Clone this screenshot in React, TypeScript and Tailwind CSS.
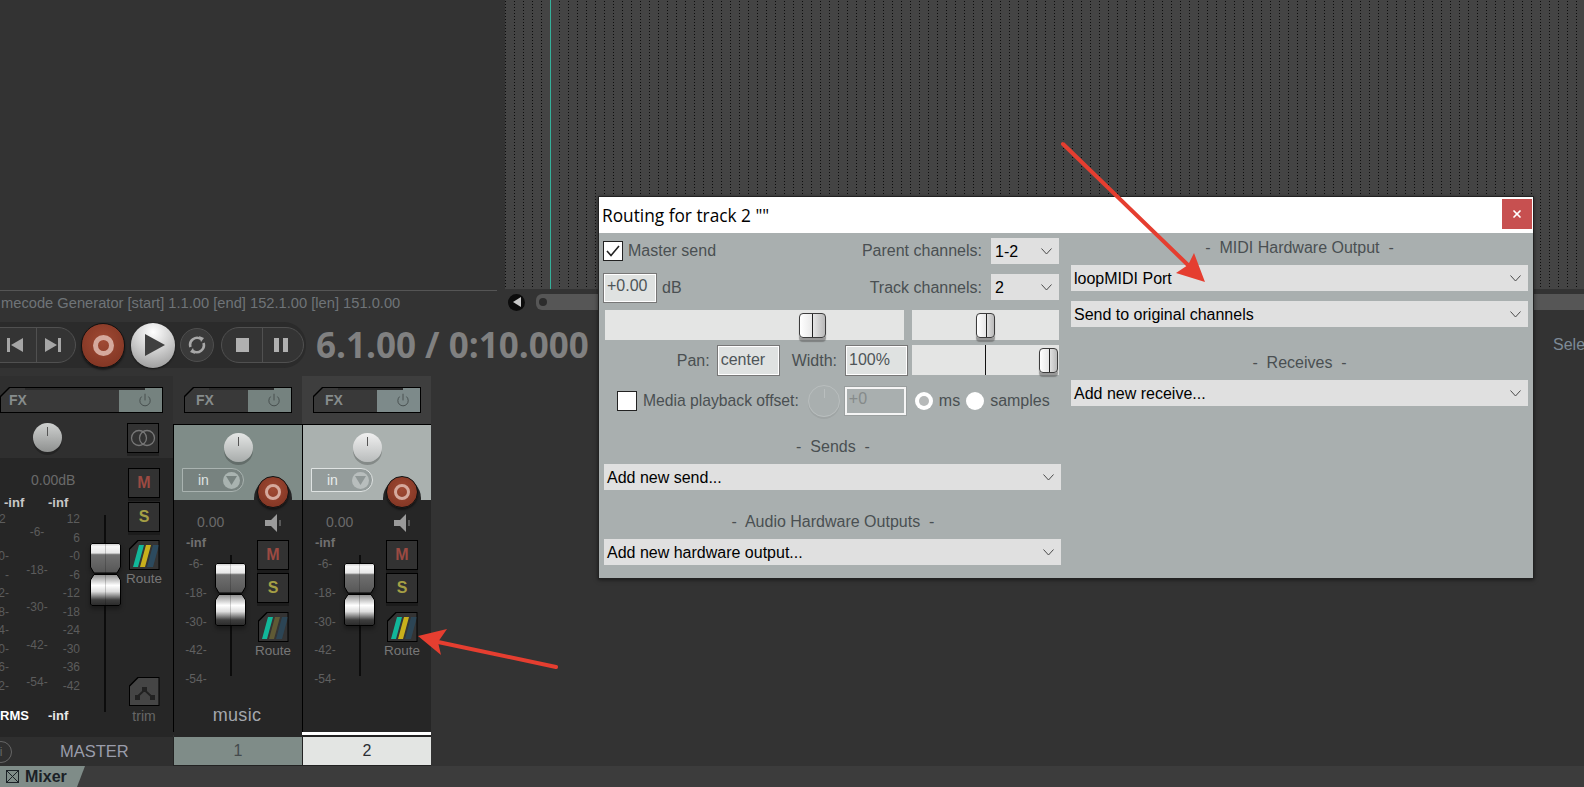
import { Power, X } from "lucide-react";

const chamfer = "[clip-path:polygon(9px_0,100%_0,100%_100%,0_100%,0_9px)]";

function Knob({ face, tick }: { face: string; tick: string }) {
  return (
    <div className={`relative h-[29px] w-[29px] shrink-0 rounded-full shadow-[0_3px_0_rgba(0,0,0,0.22)] ${face}`}>
      <div className={`absolute left-[14px] top-[4px] h-[9px] w-px ${tick}`} />
    </div>
  );
}

function FxButton({ wide, powerBg }: { wide?: boolean; powerBg: string }) {
  return (
    <div className={`relative h-[26px] shrink-0 bg-black p-px shadow-[0_3px_0_rgba(0,0,0,0.2)] ${chamfer} ${wide ? "w-[163px]" : "w-[108px]"}`}>
      <div className={`flex h-full ${chamfer}`}>
        <div className={`flex flex-1 items-center bg-[#393939] text-[14px] font-bold text-[#868c8c] ${wide ? "pl-[8px]" : "pl-[11px]"}`}>FX</div>
        <div className={`flex w-[43px] items-center justify-end pr-[10px] ${powerBg}`}>
          <Power size={14} strokeWidth={1.3} className="text-[#3a4141]" />
        </div>
      </div>
      <div className="absolute left-[25px] right-[18px] top-px h-[2px] bg-[#2a2a2a]" />
    </div>
  );
}

function SquareButton({ label, color }: { label: string; color: string }) {
  return (
    <div className={`flex h-[30px] w-[32px] items-center justify-center border border-black bg-[#323232] text-[16px] font-bold shadow-[0_3px_0_rgba(0,0,0,0.25)] ${color}`}>
      {label}
    </div>
  );
}

function RouteButton({ yellow, blue }: { yellow: string; blue: string }) {
  return (
    <div className={`h-[30px] w-[31px] bg-black p-px ${chamfer}`}>
      <svg viewBox="0 0 29 28" className={`h-full w-full bg-[#343434] ${chamfer}`}>
        <polygon points="3,26 8,26 14,4 9,4" fill="#12b79a" />
        <polygon points="10,26 15,26 21,4 16,4" fill={yellow} />
        <polygon points="17,26 23,26 29,4 23,4" fill={blue} />
      </svg>
    </div>
  );
}

function Fader() {
  return (
    <svg width="31" height="63" viewBox="0 0 31 63" className="block shrink-0 drop-shadow-[0_3px_2px_rgba(0,0,0,0.35)]">
      <defs>
        <linearGradient id="faderTop" x1="0" y1="0" x2="0" y2="1">
          <stop offset="0" stopColor="#c9c9c9" />
          <stop offset="0.1" stopColor="#f6f6f6" />
          <stop offset="0.32" stopColor="#e8e8e8" />
          <stop offset="0.38" stopColor="#707070" />
          <stop offset="1" stopColor="#565656" />
        </linearGradient>
        <linearGradient id="faderBottom" x1="0" y1="0" x2="0" y2="1">
          <stop offset="0" stopColor="#8c8c8c" />
          <stop offset="0.35" stopColor="#ffffff" />
          <stop offset="0.55" stopColor="#dddddd" />
          <stop offset="0.82" stopColor="#3f3f3f" />
          <stop offset="1" stopColor="#2a2a2a" />
        </linearGradient>
      </defs>
      <path d="M2 .5H29L30.5 2V24L27 30H4L.5 24V2Z" fill="url(#faderTop)" stroke="#000" />
      <path d="M4 31.5H27L30.5 37V61L29 62.5H2L.5 61V37Z" fill="url(#faderBottom)" stroke="#000" />
      <line x1="15.5" y1="1" x2="15.5" y2="62" stroke="#000" strokeOpacity="0.18" />
    </svg>
  );
}

function RecordButton({ big }: { big?: boolean }) {
  return (
    <div className={`flex items-center justify-center rounded-full border border-[#111] bg-[radial-gradient(circle_at_50%_40%,#a04a34,#7b3120)] shadow-[0_2px_2px_rgba(0,0,0,0.5)] ${big ? "h-[45px] w-[44px]" : "h-[32px] w-[32px]"}`}>
      <div className={`rounded-full border-[#d5a99d] ${big ? "h-[21px] w-[21px] border-[5px]" : "h-[16px] w-[16px] border-[3.5px]"}`} />
    </div>
  );
}

function Strip({ num, name, active }: { num: string; name: string; active?: boolean }) {
  return (
    <div className={`flex w-[129px] shrink-0 flex-col ${active ? "bg-[#3e3e3e]" : ""}`}>
      <div className="flex h-[48px] shrink-0 pl-[11px] pt-[11px]">
        <FxButton powerBg={active ? "bg-[#7d8a8a]" : "bg-[#75827f]"} />
      </div>
      <div className="flex w-full flex-1 flex-col border-l border-l-black">
        <div className={`relative h-[76px] shrink-0 overflow-hidden border-t border-t-black pt-[8px] ${active ? "bg-[#aab1af]" : "bg-[#7f8c88]"}`}>
          <div className="ml-[50px]">
            <Knob face={active ? "bg-[linear-gradient(#f0f0f0,#b9bcbc)]" : "bg-[linear-gradient(#e4e6e5,#a8acab)]"} tick="bg-[#555]" />
          </div>
          <div className={`ml-[8px] mt-[6px] flex h-[24px] w-[62px] items-center rounded-l-[2px] rounded-r-full border-[1.5px] pl-[15px] pr-[3px] text-[14px] ${active ? "border-[#dfe3e2] bg-[#949c9b] text-[#e9ecec]" : "border-[#a9b3b0] bg-[#77827f] text-[#dfe3e2]"}`}>
            <span className="flex-1">in</span>
            <span className={`flex h-[17px] w-[17px] items-center justify-center rounded-full ${active ? "bg-[#b8bebd]" : "bg-[#a9b3b0]"}`}>
              <svg width="11" height="9" viewBox="0 0 11 9">
                <polygon points="0,0 11,0 5.5,9" fill={active ? "#8f9796" : "#77827f"} />
              </svg>
            </span>
          </div>
          <div className="absolute left-[80px] top-[54px] h-[38px] w-[38px] rounded-full bg-[#262626]" />
        </div>
        <div className="relative flex flex-1 flex-col bg-[#262626]">
          <div className="absolute left-[83px] top-[-24px]">
            <RecordButton />
          </div>
          <div className="flex">
            <div className="w-[72px]">
              <div className="ml-[23px] mt-[14px] h-[16px] text-[14px] leading-[16px] text-[#6a6a6a]">0.00</div>
              <div className="flex">
                <div className="ml-[3px] flex w-[38px] flex-col items-center text-[12px] leading-[14px] text-[#606060]">
                  <span className="mb-[7px] mt-[6px] text-[13px] font-bold text-[#707070]">-inf</span>
                  <div className="flex flex-col items-center gap-[14.75px]">
                    {["-6-", "-18-", "-30-", "-42-", "-54-"].map((label) => (
                      <span key={label}>{label}</span>
                    ))}
                  </div>
                </div>
                <div className="flex w-[31px] flex-col items-center pt-[25px]">
                  <div className="h-[8px] w-[2px] bg-[#0c0c0c]" />
                  <Fader />
                  <div className="h-[50px] w-[2px] bg-[#0c0c0c]" />
                </div>
              </div>
            </div>
            <div className="ml-[11px] flex w-[32px] flex-col items-center pt-[14px]">
              <svg width="16" height="18" viewBox="0 0 16 18" className="mb-[8px]">
                <polygon points="0,6 6,6 12,0 12,18 6,12 0,12" fill="#9a9a9a" />
                <line x1="15" y1="6" x2="15" y2="12" stroke="#8a8a8a" />
              </svg>
              <SquareButton label="M" color="text-[#9b4a42]" />
              <div className="h-[3px]" />
              <SquareButton label="S" color="text-[#a59f45]" />
              <div className="h-[9px]" />
              <RouteButton yellow={active ? "#c9b01c" : "#5f5a35"} blue="#2c4555" />
              <div className="mt-px whitespace-nowrap text-[13.5px] leading-[16px] text-[#777]">Route</div>
            </div>
          </div>
          <div className="mt-[17px] h-[24px] w-[126px] text-center text-[18px] leading-[24px] tracking-[0.3px] text-[#a3a7ad]">{name}</div>
        </div>
      </div>
      {active ? <div className="h-[3px] shrink-0 bg-white" /> : <div className="h-[3px] shrink-0 bg-[#262626]" />}
      <div className={`h-[2px] shrink-0 ${active ? "bg-[#222]" : "border-l border-l-[#2f2f2f] bg-[#262626]"}`} />
      <div className={`flex h-[28px] shrink-0 items-center justify-center border-l border-l-[#222] text-[16px] ${active ? "bg-[#e3e5e3] text-[#2a2d33]" : "bg-[#7f8c88] text-[#444a4c]"}`}>{num}</div>
      <div className="h-px shrink-0 bg-[#222]" />
    </div>
  );
}

function MasterStrip() {
  const rightScale = ["12", "6", "-0", "-6", "-12", "-18", "-24", "-30", "-36", "-42"];
  const leftScale = ["12\u00a0", "", "-0-", "-", "-12-", "-18-", "-24-", "-30-", "-36-", "-42-"];
  return (
    <div className="flex w-[173px] shrink-0 flex-col">
      <div className="flex h-[82px] flex-col bg-[#2f2f2f] pt-[11px]">
        <FxButton wide powerBg="bg-[#75827f]" />
        <div className="mt-[10px] flex">
          <div className="ml-[33px]">
            <Knob face="bg-[linear-gradient(#cfd1d0,#8f9190)]" tick="bg-[#555]" />
          </div>
          <div className="ml-[65px] flex h-[30px] w-[32px] items-center justify-center border border-black bg-[#323232] shadow-[0_3px_0_rgba(0,0,0,0.25)]">
            <svg width="26" height="18" viewBox="0 0 26 18" fill="none" stroke="#777" strokeWidth="1.3">
              <circle cx="9" cy="9" r="7.5" />
              <circle cx="17" cy="9" r="7.5" />
            </svg>
          </div>
        </div>
      </div>
      <div className="flex h-[279px] bg-[#262626]">
        <div className="w-[90px] shrink-0">
          <div className="ml-[31px] mt-[14px] h-[16px] whitespace-nowrap text-[14px] leading-[16px] text-[#6a6a6a]">0.00dB</div>
          <div className="mt-[7px] flex h-[16px] text-[13px] font-bold leading-[16px] text-[#c8c8c8]">
            <span className="ml-[4px] w-[44px]">-inf</span>
            <span>-inf</span>
          </div>
          <div className="flex h-[197px] overflow-hidden text-[12px] leading-[14px] text-[#5c5c5c]">
            <div className="-ml-[21px] flex w-[30px] flex-col gap-[4.55px] pt-px text-right">
              {leftScale.map((label, i) => (
                <span key={i} className="h-[14px] whitespace-nowrap">{label}</span>
              ))}
            </div>
            <div className="ml-[3px] flex w-[50px] flex-col items-center gap-[23.5px] pt-[14px]">
              {["-6-", "-18-", "-30-", "-42-", "-54-"].map((label) => (
                <span key={label} className="h-[14px]">{label}</span>
              ))}
            </div>
            <div className="flex w-[18px] flex-col items-end gap-[4.55px] pt-px">
              {rightScale.map((label) => (
                <span key={label} className="h-[14px] whitespace-nowrap">{label}</span>
              ))}
            </div>
          </div>
          <div className="flex h-[16px] text-[13px] font-bold leading-[16px]">
            <span className="w-[27px] text-right text-white">RMS</span>
            <span className="ml-[21px] text-[#e8e8e8]">-inf</span>
          </div>
        </div>
        <div className="flex w-[30px] flex-col items-center pt-[57px]">
          <div className="h-[28px] w-[2px] bg-[#0c0c0c]" />
          <Fader />
          <div className="h-[106px] w-[2px] bg-[#0c0c0c]" />
        </div>
        <div className="ml-[8px] flex w-[32px] flex-col items-center pt-[10px]">
          <SquareButton label="M" color="text-[#9b4a42]" />
          <div className="h-[4px]" />
          <SquareButton label="S" color="text-[#a59f45]" />
          <div className="h-[8px]" />
          <RouteButton yellow="#c9b01c" blue="#2c4a5e" />
          <div className="mt-px h-[16px] whitespace-nowrap text-[13.5px] leading-[16px] text-[#777]">Route</div>
          <div className={`mt-[90px] h-[29px] w-[31px] bg-black p-px ${chamfer}`}>
            <svg viewBox="0 0 29 27" className={`h-full w-full bg-[#454545] ${chamfer}`}>
              <polyline points="7,19 14.5,12 22,19" fill="none" stroke="#222" strokeWidth="2" />
              <rect x="5" y="17" width="5" height="5" fill="#222" />
              <rect x="12" y="9" width="5" height="5" fill="#222" />
              <rect x="20" y="17" width="5" height="5" fill="#222" />
            </svg>
          </div>
          <div className="mt-[2px] h-[16px] text-[14px] leading-[16px] text-[#666]">trim</div>
        </div>
      </div>
      <div className="flex h-[29px] items-center bg-[#2f2f2f] text-[16.5px] text-[#9a9dab]">
        <div className="-ml-[10px] flex h-[22px] w-[22px] shrink-0 items-center justify-center rounded-full border border-[#666] text-[12px] text-[#666]">i</div>
        <span className="ml-[48px]">MASTER</span>
      </div>
    </div>
  );
}

function Transport() {
  return (
    <div className="flex h-[46px] items-center justify-between pr-0">
      <div className="flex items-center">
        <div className="-ml-[24px] flex h-[46px] w-[330px] items-center rounded-[22px] bg-[#2b2b2b] pl-[2px]">
          <div className="flex h-[36px] w-[98px] shrink-0 items-stretch rounded-full border border-[#505050] bg-[#343434]">
            <div className="flex w-[58px] items-center justify-end border-r border-r-[#505050] pr-[13px]">
              <svg width="16" height="14" viewBox="0 0 16 14" fill="#a6a6a6">
                <rect x="0" y="0" width="3" height="14" />
                <polygon points="16,0 16,14 4,7" />
              </svg>
            </div>
            <div className="flex flex-1 items-center pl-[8px]">
              <svg width="16" height="14" viewBox="0 0 16 14" fill="#a6a6a6">
                <rect x="13" y="0" width="3" height="14" />
                <polygon points="0,0 0,14 12,7" />
              </svg>
            </div>
          </div>
          <div className="ml-[5px]">
            <RecordButton big />
          </div>
          <div className="ml-[6px] flex h-[45px] w-[44px] items-center justify-center rounded-full bg-[radial-gradient(circle_at_50%_20%,#ffffff,#d0d0d0_45%,#8f8f8f)] shadow-[0_1px_2px_rgba(0,0,0,0.6)]">
            <svg width="21" height="22" viewBox="0 0 21 22" className="ml-[3px]">
              <polygon points="1,0 21,11 1,22" fill="#404040" />
            </svg>
          </div>
          <div className="ml-[5px] flex h-[34px] w-[34px] items-center justify-center rounded-full border border-[#4e4e4e] bg-[#3a3a3a]">
            <svg width="20" height="20" viewBox="0 0 20 20" fill="none" stroke="#a8a8a8" strokeWidth="2.6">
              <path d="M3.5 12A7 7 0 0 1 14 4" />
              <path d="M16.5 8A7 7 0 0 1 6 16" />
              <polygon points="12,1 17,3 14,7" fill="#a8a8a8" stroke="none" />
              <polygon points="8,19 3,17 6,13" fill="#a8a8a8" stroke="none" />
            </svg>
          </div>
          <div className="ml-[7px] flex h-[36px] w-[83px] shrink-0 items-stretch rounded-full border border-[#505050] bg-[#343434]">
            <div className="flex w-[41px] items-center justify-end border-r border-r-[#505050] pr-[13px]">
              <div className="h-[14px] w-[13px] bg-[#b0b0b0]" />
            </div>
            <div className="flex flex-1 items-center gap-[4px] pl-[11px]">
              <div className="h-[14px] w-[5px] bg-[#b0b0b0]" />
              <div className="h-[14px] w-[5px] bg-[#b0b0b0]" />
            </div>
          </div>
        </div>
        <div className="ml-[10px] whitespace-nowrap text-[35px] font-bold text-[#808080] [font-family:'Open_Sans',sans-serif]">6.1.00 / 0:10.000</div>
      </div>
      <div className="w-[31px] overflow-hidden whitespace-nowrap text-[16px] text-[#7d8a96]">Selection:</div>
    </div>
  );
}

function Chevron() {
  return (
    <svg width="11" height="7" viewBox="0 0 11 7" fill="none" stroke="#4a4a4a" className="shrink-0">
      <polyline points="0.5,0.5 5.5,6 10.5,0.5" />
    </svg>
  );
}

function DropDown({ text, short }: { text: string; short?: boolean }) {
  return (
    <div className={`flex h-[26px] items-center justify-between bg-[#e0e0e0] pl-[3px] pr-[7px] text-[16px] text-black ${short ? "w-[68px] shrink-0 pl-[4px]" : "w-[457px]"}`}>
      <span className="pt-[2px]">{text}</span>
      <Chevron />
    </div>
  );
}

function Thumb({ wide }: { wide?: boolean }) {
  return (
    <div className={`relative mt-[3px] h-[25px] rounded-[4px] border border-[#3c3c3c] bg-[linear-gradient(90deg,#fff,#e8e8e8_50%,#b9b9b9)] shadow-[0_4px_1px_rgba(90,90,90,0.55)] ${wide ? "w-[27px]" : "w-[19px]"}`}>
      <div className="absolute bottom-0 left-1/2 top-0 w-px bg-[#222]" />
    </div>
  );
}

const fieldBox = "border border-[#777] bg-[#dfe2e1] shadow-[inset_-1px_-1px_0_#fff,inset_1px_1px_0_#fff] pl-[3px] text-[#4e5558]";
const heading = "h-[20px] text-center text-[16px] leading-[22px] text-[#4a4f52]";

function RoutingDialog() {
  return (
    <div className="absolute left-[598px] top-[196px] w-[936px] border border-[#222] bg-[#a9afaf] text-[16px] text-[#4a4f52] shadow-[0_1px_4px_rgba(0,0,0,0.5)]">
      <div className="flex h-[36px] justify-between bg-white pt-[2px]">
        <div className="pl-[3px] pt-[5px] text-[17.3px] leading-[24px] text-black [font-family:'Open_Sans',sans-serif]">Routing for track 2 ""</div>
        <div className="mr-px flex h-[30px] w-[30px] items-center justify-center bg-[#c75050]">
          <X size={12} strokeWidth={3.5} className="text-white" />
        </div>
      </div>
      <div className="flex pb-[13px]">
        <div className="w-[463px] shrink-0 pl-[5px]">
          <div className="mt-[5px] flex h-[26px] items-center">
            <div className="-ml-px flex h-[20px] w-[20px] items-center justify-center border border-[#222] bg-white">
              <svg width="14" height="12" viewBox="0 0 14 12" fill="none" stroke="#222" strokeWidth="1.6">
                <polyline points="1,6 5,10.5 13,1" />
              </svg>
            </div>
            <span className="ml-[5px]">Master send</span>
            <span className="ml-auto mr-[9px]">Parent channels:</span>
            <div className="mr-[3px]">
              <DropDown text="1-2" short />
            </div>
          </div>
          <div className="mt-[9px] flex h-[30px]">
            <div className={`-ml-px h-[30px] w-[54px] leading-[24px] ${fieldBox}`}>+0.00</div>
            <span className="ml-[5px] leading-[30px]">dB</span>
            <span className="ml-auto mr-[9px] leading-[30px]">Track channels:</span>
            <div className="mr-[3px] mt-px">
              <DropDown text="2" short />
            </div>
          </div>
          <div className="ml-px mt-[7px] flex gap-[8px]">
            <div className="flex h-[30px] w-[299px] justify-center bg-[#e4e5e4] pl-[115px]">
              <Thumb wide />
            </div>
            <div className="flex h-[30px] w-[147px] justify-center bg-[#e4e5e4]">
              <Thumb />
            </div>
          </div>
          <div className="ml-px mt-[5px] flex h-[31px]">
            <div className="flex w-[303px] justify-end">
              <span className="mr-[7px] leading-[31px]">Pan:</span>
              <div className={`h-[31px] w-[63px] leading-[27px] ${fieldBox}`}>center</div>
              <span className="ml-[12px] mr-[8px] leading-[31px]">Width:</span>
              <div className={`h-[31px] w-[63px] leading-[27px] ${fieldBox}`}>100%</div>
            </div>
            <div className="relative ml-[4px] flex h-[30px] w-[147px] justify-end bg-[#e4e5e4] pr-px">
              <div className="absolute bottom-0 left-[73px] top-0 w-px bg-[#111]" />
              <Thumb />
            </div>
          </div>
          <div className="mt-[11px] flex h-[28px] items-center">
            <div className="ml-[13px] h-[20px] w-[20px] shrink-0 border border-[#222] bg-white" />
            <span className="ml-[6px] whitespace-nowrap text-[15.7px]">Media playback offset:</span>
            <div className="relative ml-[9px] h-[32px] w-[32px] shrink-0 rounded-full border border-[#b9bebe] shadow-[0_2px_0_rgba(0,0,0,0.06)]">
              <div className="absolute left-[15px] top-[3px] h-[9px] w-px bg-[#b9bebe]" />
            </div>
            <div className="ml-[5px] h-[28px] w-[61px] shrink-0 border-2 border-[#f5f5f5] pl-[2px] leading-[20px] text-[#858a8a] shadow-[0_0_0_1px_#9a9f9f]">+0</div>
            <div className="ml-[9px] flex h-[18px] w-[18px] shrink-0 items-center justify-center rounded-full bg-white">
              <div className="h-[10px] w-[10px] rounded-full bg-[#b6b9b9]" />
            </div>
            <span className="ml-[6px]">ms</span>
            <div className="ml-[6px] h-[18px] w-[18px] shrink-0 rounded-full bg-white" />
            <span className="ml-[6px]">samples</span>
          </div>
          <div className={`mt-[21px] ${heading}`}>-&nbsp; Sends &nbsp;-</div>
          <div className="mt-[8px]">
            <DropDown text="Add new send..." />
          </div>
          <div className={`mt-[21px] ${heading}`}>-&nbsp; Audio Hardware Outputs &nbsp;-</div>
          <div className="mt-[8px]">
            <DropDown text="Add new hardware output..." />
          </div>
        </div>
        <div className="ml-[9px] w-[457px] shrink-0">
          <div className={`mt-[4px] ${heading}`}>-&nbsp; MIDI Hardware Output &nbsp;-</div>
          <div className="mt-[8px]">
            <DropDown text="loopMIDI Port" />
          </div>
          <div className="mt-[10px]">
            <DropDown text="Send to original channels" />
          </div>
          <div className={`mt-[25px] ${heading}`}>-&nbsp; Receives &nbsp;-</div>
          <div className="mt-[8px]">
            <DropDown text="Add new receive..." />
          </div>
        </div>
      </div>
    </div>
  );
}

export default function App() {
  return (
    <div className="relative h-[787px] w-[1584px] overflow-hidden bg-[#333333] [font-family:'Liberation_Sans',Arial,sans-serif]">
      <div className="flex h-[322px]">
        <div className="w-[505px] shrink-0">
          <div className="h-[291px] w-[497px] border-b border-b-[#555]" />
          <div className="h-[24px] whitespace-nowrap pl-px text-[14.7px] leading-[24px] text-[#6f7478]">
            mecode Generator [start] 1.1.00 [end] 152.1.00 [len] 151.0.00
          </div>
        </div>
        <div className="flex-1">
          <div className="relative h-[289px] bg-[#444444] [background-image:repeating-linear-gradient(0deg,#444_0,#444_2px,transparent_2px,transparent_3px),repeating-linear-gradient(90deg,#0c0c0c_0,#0c0c0c_1px,transparent_1px,transparent_9px)]">
            <div className="absolute bottom-0 left-[45px] top-0 w-px bg-[#35b09a]" />
          </div>
          <div className="mt-[5px] flex h-[16px] items-center">
            <div className="ml-[3px] flex h-[17px] w-[17px] items-center justify-center rounded-full bg-[#0c0c0c]">
              <svg width="8" height="10" viewBox="0 0 8 10">
                <polygon points="8,0 8,10 0,5" fill="#c8c8c8" />
              </svg>
            </div>
            <div className="ml-[11px] flex h-[16px] flex-1 items-center rounded-l-[6px] bg-[#565656] pl-[3px]">
              <div className="h-[8px] w-[8px] rounded-full bg-[#2c2c2c]" />
            </div>
          </div>
        </div>
      </div>
      <Transport />
      <div className="mt-[8px] flex h-[390px]">
        <MasterStrip />
        <Strip num="1" name="music" />
        <Strip num="2" name="" active />
      </div>
      <div className="h-[21px] bg-[#3c3c3c]">
        <div className="flex h-full w-[85px] items-center gap-[6px] bg-[#7f8c88] pl-[6px] text-[16px] font-bold text-[#1b2126] [clip-path:polygon(0_0,100%_0,77px_100%,0_100%)]">
          <svg width="13" height="13" viewBox="0 0 13 13" fill="none" stroke="#1b2126">
            <rect x="0.5" y="0.5" width="12" height="12" />
            <path d="M1 1L12 12M12 1L1 12" />
          </svg>
          Mixer
        </div>
      </div>
      <RoutingDialog />
      <svg width="1584" height="787" viewBox="0 0 1584 787" className="pointer-events-none absolute inset-0">
        <line x1="556" y1="667" x2="438" y2="642" stroke="#e53e30" strokeWidth="4" strokeLinecap="round" />
        <polygon points="418,636 447,629 438,642 441,655" fill="#e53e30" />
        <line x1="1063" y1="144" x2="1188" y2="265" stroke="#e53e30" strokeWidth="4" strokeLinecap="round" />
        <polygon points="1205,282 1194,253 1188,265 1176,273" fill="#e53e30" />
      </svg>
    </div>
  );
}
